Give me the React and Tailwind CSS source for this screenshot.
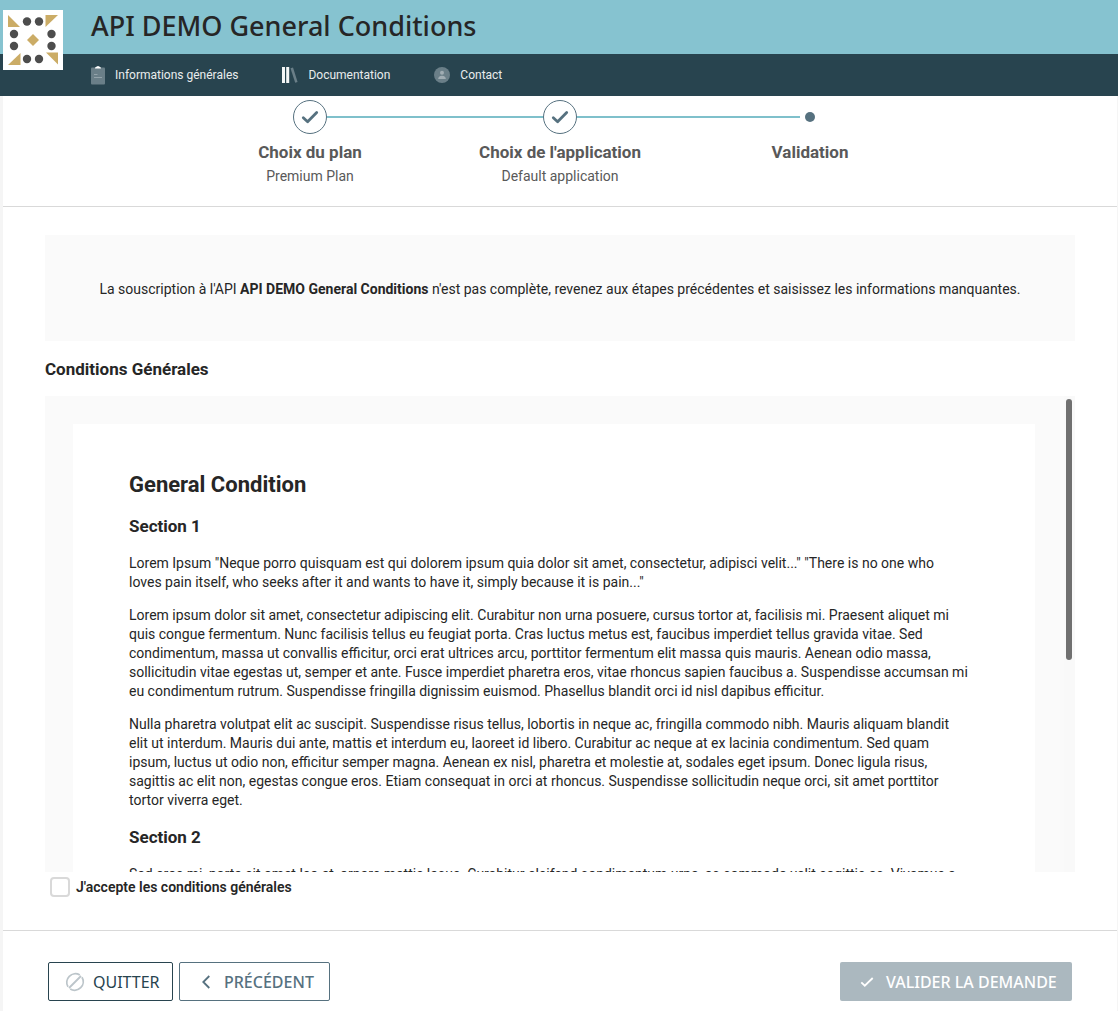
import { Fragment } from 'react';

const heading = 'text-[17px] leading-6 font-bold';

function Logo() {
  const dots = [[24, 11.5], [36, 11.5], [11, 24], [11, 36], [48.5, 24], [48.5, 36], [24, 49], [36, 49]];
  return (
    <svg className="size-15 bg-white" viewBox="0 0 60 60" aria-label="Logo">
      <g fill="#cbac66">
        <path d="M5 5L17 17H5z" />
        <path d="M42.500 5H55L42.500 17z" />
        <path d="M5 55L17.500 43V55z" />
        <path d="M43 42.500H55V54.500z" />
        <path d="M30 24L36 30L30 36L24 30z" />
      </g>
      <g fill="#4d4d4d">
        {dots.map(([x, y]) => (
          <circle key={`${x}-${y}`} cx={x} cy={y} r="4.200" />
        ))}
      </g>
    </svg>
  );
}

function ClipboardIcon() {
  return (
    <svg className="h-[19px] w-3.5" viewBox="0 0 14 19">
      <rect y="1.500" width="14" height="17" rx="1" fill="#6a7f88" />
      <path d="M4 2.500C4 1 5.500 1 5.800 .6Q7-.4 8.200 .6C8.500 1 10 1 10 2.500z" fill="#fff" />
      <path d="M3 8.500h3.500M3 11.500h8" stroke="#93a3aa" />
    </svg>
  );
}

function BooksIcon() {
  return (
    <svg className="h-4 w-4" viewBox="0 0 16 16">
      <path d="M0 0h3v16H0zM4.200 0h3v16h-3z" fill="#f4f6f6" />
      <path d="M8.500 1.200L11 .5L15.600 15L13.200 15.800z" fill="#6a7f88" />
    </svg>
  );
}

function ContactIcon() {
  return (
    <svg className="size-4" viewBox="0 0 16 16">
      <circle cx="8" cy="8" r="8" fill="#6a7f88" />
      <circle cx="8" cy="5.700" r="2" fill="#a0adb3" />
      <path d="M4.200 12c0-2 1.200-3.300 3.800-3.300s3.800 1.300 3.800 3.300z" fill="#a0adb3" />
    </svg>
  );
}

function StepCheck() {
  return (
    <svg className="h-3.5 w-4.5" viewBox="0 0 18 14" fill="none" stroke="#56717f" strokeWidth="2.800" strokeLinecap="round" strokeLinejoin="round">
      <path d="M2.300 7.800L6.600 11.800L15.700 2.500" />
    </svg>
  );
}

const nav = [
  { label: 'Informations générales', icon: <ClipboardIcon /> },
  { label: 'Documentation', icon: <BooksIcon /> },
  { label: 'Contact', icon: <ContactIcon /> },
];

const steps = [
  { title: 'Choix du plan', detail: 'Premium Plan', done: true },
  { title: "Choix de l'application", detail: 'Default application', done: true },
  { title: 'Validation', detail: '', done: false },
];

function Step({ title, detail, done, last }) {
  return (
    <li className="relative flex w-[250px] flex-col items-center">
      {!last && <span className="absolute top-4 left-[142px] h-0.5 w-[223px] bg-[#7fc0cb]" />}
      {done ? (
        <span className="relative flex size-[34px] items-center justify-center rounded-full border border-[#56717f] bg-white">
          <StepCheck />
        </span>
      ) : (
        <span className="flex h-[34px] items-center">
          <span className="size-2.5 rounded-full bg-[#56717f]" />
        </span>
      )}
      <span className={`mt-1.5 whitespace-nowrap text-[#595959] ${heading}`}>{title}</span>
      <span className="h-6 text-sm leading-6 text-[#595959]">{detail}</span>
    </li>
  );
}

const paragraphs = [
  [
    'Lorem Ipsum "Neque porro quisquam est qui dolorem ipsum quia dolor sit amet, consectetur, adipisci velit..." "There is no one who',
    'loves pain itself, who seeks after it and wants to have it, simply because it is pain..."',
  ],
  [
    'Lorem ipsum dolor sit amet, consectetur adipiscing elit. Curabitur non urna posuere, cursus tortor at, facilisis mi. Praesent aliquet mi',
    'quis congue fermentum. Nunc facilisis tellus eu feugiat porta. Cras luctus metus est, faucibus imperdiet tellus gravida vitae. Sed',
    'condimentum, massa ut convallis efficitur, orci erat ultrices arcu, porttitor fermentum elit massa quis mauris. Aenean odio massa,',
    'sollicitudin vitae egestas ut, semper et ante. Fusce imperdiet pharetra eros, vitae rhoncus sapien faucibus a. Suspendisse accumsan mi',
    'eu condimentum rutrum. Suspendisse fringilla dignissim euismod. Phasellus blandit orci id nisl dapibus efficitur.',
  ],
  [
    'Nulla pharetra volutpat elit ac suscipit. Suspendisse risus tellus, lobortis in neque ac, fringilla commodo nibh. Mauris aliquam blandit',
    'elit ut interdum. Mauris dui ante, mattis et interdum eu, laoreet id libero. Curabitur ac neque at ex lacinia condimentum. Sed quam',
    'ipsum, luctus ut odio non, efficitur semper magna. Aenean ex nisl, pharetra et molestie at, sodales eget ipsum. Donec ligula risus,',
    'sagittis ac elit non, egestas congue eros. Etiam consequat in orci at rhoncus. Suspendisse sollicitudin neque orci, sit amet porttitor',
    'tortor viverra eget.',
  ],
];

function Paragraph({ lines }) {
  return (
    <p className="mb-3.5 text-sm leading-[19px] whitespace-nowrap">
      {lines.map((line, i) => (
        <Fragment key={line}>
          {i > 0 && <br />}
          {line}
        </Fragment>
      ))}
    </p>
  );
}

export default function App() {
  return (
    <div className="font-[Roboto,sans-serif] text-[#262626]">
      <header className="relative">
        <div className="flex h-[54px] items-center bg-[#86c3d0] pl-[91px]">
          <h1 className="pb-0.5 font-['Noto_Sans',sans-serif] text-[27px] leading-9 font-medium">API DEMO General Conditions</h1>
        </div>
        <nav className="flex h-[42px] items-center gap-11 bg-[#28444f] pl-[91px] text-xs text-[#e9eced]">
          {nav.map(({ label, icon }) => (
            <a key={label} href="#" className="flex items-center gap-2.5">
              {icon}
              <span>{label}</span>
            </a>
          ))}
        </nav>
        <div className="absolute top-2.5 left-[3px]">
          <Logo />
        </div>
      </header>

      <div className="border-r border-l-3 border-[#f5f5f5] bg-white">
        <ol className="flex justify-center border-b border-[#d9d9d9] pt-1 pb-[18px]">
          {steps.map((step, i) => (
            <Step key={step.title} {...step} last={i === steps.length - 1} />
          ))}
        </ol>

        <main className="px-[42px] pt-7">
          <div className="flex h-[106px] items-center justify-center bg-[#fafafa] pt-0.5 text-sm">
            <p>
              La souscription à l'API <strong>API DEMO General Conditions</strong> n'est pas complète, revenez aux étapes précédentes et saisissez
              les informations manquantes.
            </p>
          </div>

          <h2 className={`mt-4 ${heading}`}>Conditions Générales</h2>

          <div className="relative mt-[15px] h-[476px] overflow-hidden bg-[#fafafa] py-7 pr-10 pl-7">
            <article className="bg-white p-14 pt-[47px]">
              <h3 className="text-[22px] leading-7 font-bold">General Condition</h3>
              <h4 className={`mt-[15px] mb-4 ${heading}`}>Section 1</h4>
              {paragraphs.map((lines) => (
                <Paragraph key={lines[0]} lines={lines} />
              ))}
              <h4 className={`mt-[15px] mb-4 ${heading}`}>Section 2</h4>
              <Paragraph
                lines={['Sed eros mi, porta sit amet leo at, ornare mattis lacus. Curabitur eleifend condimentum urna, ac commodo velit sagittis ac. Vivamus a']}
              />
            </article>
            <div className="absolute top-0 right-0 h-full w-[11px] bg-[#f9f9f9] pt-[3px] pl-0.5">
              <div className="h-[261px] w-1.5 rounded-full bg-[#707070]" />
            </div>
          </div>

          <label className="mt-[5px] ml-[5px] flex w-fit items-center gap-1.5 text-sm leading-5 font-semibold">
            <input type="checkbox" className="size-5 appearance-none rounded-sm border-2 border-[#d9d9d9] bg-white checked:bg-[#56717f]" />
            J'accepte les conditions générales
          </label>
        </main>

        <footer className="mt-[33px] flex items-center gap-1.5 border-t border-[#d9d9d9] px-[45px] pt-[31px] pb-2.5 font-['Noto_Sans',sans-serif] text-base">
          <button type="button" className="flex h-[39px] w-[125px] items-center gap-2 rounded-xs border border-[#28444f] pl-4 text-[#28444f]">
            <svg className="size-5" viewBox="0 0 20 20" fill="none" stroke="#bcc5ca" strokeWidth="1.800">
              <path d="M3 14.800A8.600 8.600 0 0 1 14.800 3M17 5.200A8.600 8.600 0 0 1 5.200 17M4 16L16 4" />
            </svg>
            QUITTER
          </button>
          <button type="button" className="flex h-[39px] w-[151px] items-center gap-3 rounded-xs border border-[#56717f] pl-5 font-medium text-[#56717f]">
            <svg className="h-3.5 w-3" viewBox="0 0 12 14" fill="none" stroke="currentColor" strokeWidth="1.800">
              <path d="M9.300 1L3.300 7L9.300 13" />
            </svg>
            PRÉCÉDENT
          </button>
          <button type="button" className="ml-auto flex h-[39px] w-[232px] items-center gap-3 rounded-xs bg-[#abb8bf] pl-5 font-medium text-white">
            <svg className="h-2.5 w-3.5" viewBox="0 0 14 10" fill="none" stroke="currentColor" strokeWidth="1.800">
              <path d="M1.300 5.300L4.800 8.700L12.700 1" />
            </svg>
            VALIDER LA DEMANDE
          </button>
        </footer>
      </div>
    </div>
  );
}
